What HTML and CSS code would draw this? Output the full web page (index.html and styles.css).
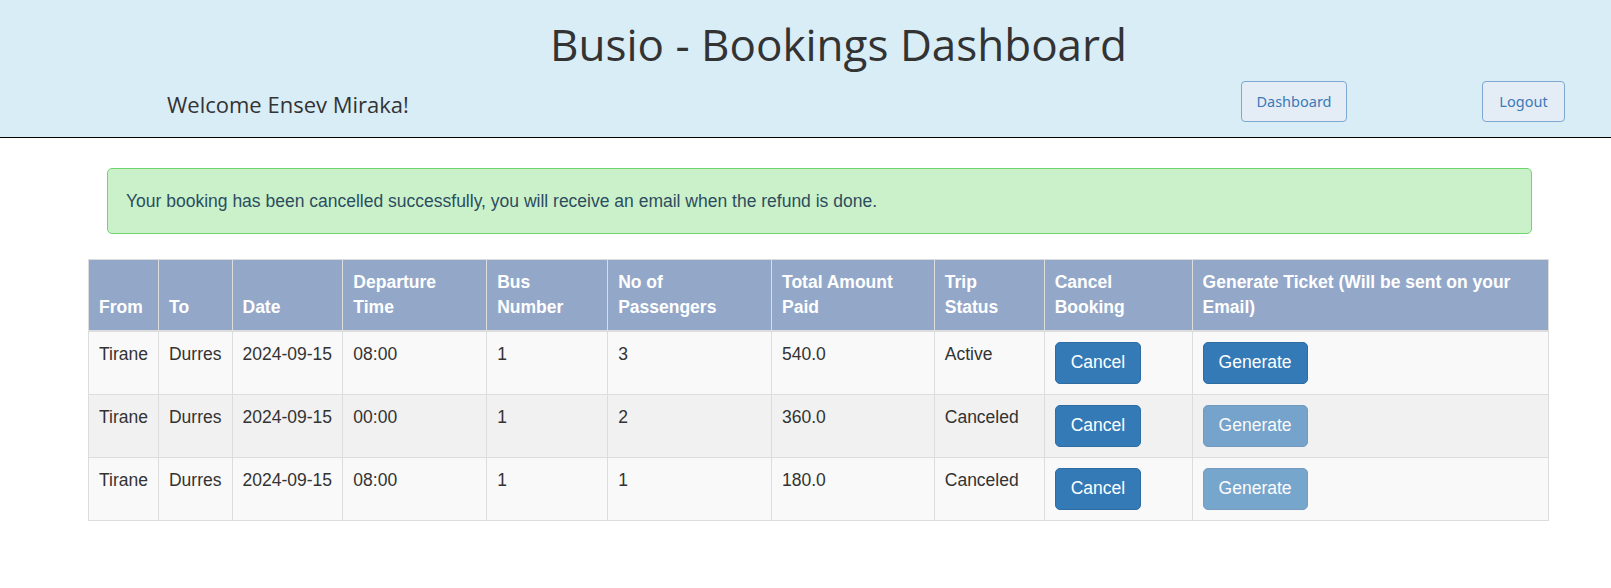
FILE: index.html
```html
<!DOCTYPE html>
<html lang="en">
<head>
<meta charset="utf-8">
<title>Busio - Bookings Dashboard</title>
<link rel="stylesheet" href="styles.css">
</head>
<body>
<header class="site-header">
  <h1 class="site-title">Busio - Bookings Dashboard</h1>
  <nav class="nav-row">
    <span class="welcome">Welcome Ensev Miraka!</span>
    <div class="nav-buttons">
      <a class="nav-btn" href="#">Dashboard</a>
      <a class="nav-btn" href="#">Logout</a>
    </div>
  </nav>
</header>
<main class="content">
  <div class="alert">Your booking has been cancelled successfully, you will receive an email when the refund is done.</div>
  <table class="bookings">
    <colgroup>
      <col class="c-from"><col class="c-to"><col class="c-date"><col class="c-time"><col class="c-bus"><col class="c-pass"><col class="c-amount"><col class="c-status"><col class="c-cancel"><col class="c-gen">
    </colgroup>
    <thead>
      <tr>
        <th>From</th><th>To</th><th>Date</th><th>Departure Time</th><th>Bus Number</th><th>No of Passengers</th><th>Total Amount Paid</th><th>Trip Status</th><th>Cancel Booking</th><th>Generate Ticket (Will be sent on your Email)</th>
      </tr>
    </thead>
    <tbody>
      <tr>
        <td>Tirane</td><td>Durres</td><td>2024-09-15</td><td>08:00</td><td>1</td><td>3</td><td>540.0</td><td>Active</td>
        <td><button class="btn">Cancel</button></td><td><button class="btn">Generate</button></td>
      </tr>
      <tr>
        <td>Tirane</td><td>Durres</td><td>2024-09-15</td><td>00:00</td><td>1</td><td>2</td><td>360.0</td><td>Canceled</td>
        <td><button class="btn">Cancel</button></td><td><button class="btn btn-disabled" disabled>Generate</button></td>
      </tr>
      <tr>
        <td>Tirane</td><td>Durres</td><td>2024-09-15</td><td>08:00</td><td>1</td><td>1</td><td>180.0</td><td>Canceled</td>
        <td><button class="btn">Cancel</button></td><td><button class="btn btn-disabled" disabled>Generate</button></td>
      </tr>
    </tbody>
  </table>
</main>
</body>
</html>
```

FILE: styles.css
```css
* { box-sizing: border-box; }

body {
  margin: 0;
  font-family: "Liberation Sans", Arial, sans-serif;
  font-size: 17.5px;
  line-height: 25px;
  color: #333;
  background: #fff;
}

.site-header {
  background: #d9edf7;
  border-bottom: 1.5px solid #000;
  padding: 16px 46px 14px 167px;
  height: 138px;
}

.site-title {
  margin: 0 -46px 9px -167px;
  padding-left: 66px;
  text-align: center;
  font-family: "Open Sans", sans-serif;
  font-weight: 400;
  font-size: 44px;
  line-height: 56px;
  color: #333;
}

.nav-row {
  display: flex;
  align-items: center;
  height: 41px;
}

.welcome {
  margin-right: auto;
  font-family: "Open Sans", sans-serif;
  font-size: 22px;
  color: #333;
  padding-top: 6px;
}

.nav-buttons {
  display: flex;
  gap: 135px;
}

.nav-btn {
  display: inline-flex;
  align-items: center;
  justify-content: center;
  height: 41px;
  padding: 0 14px;
  background: #e4edf6;
  border: 1px solid #7ea8d0;
  border-radius: 4px;
  color: #3a7ab8;
  text-decoration: none;
  font-family: "Noto Sans", sans-serif;
  font-size: 14.5px;
}

.nav-btn:first-child { width: 106px; }
.nav-btn:last-child { width: 83px; }

.content {
  padding: 30px 62px 0 88px;
}

.alert {
  margin: 0 17px 25px 19px;
  padding: 19.5px 18px;
  background: #cbf1cb;
  border: 1.5px solid #6ed66e;
  border-radius: 5px;
  color: #2c4d5e;
  line-height: 25px;
}

.bookings {
  width: 1461px;
  border-collapse: collapse;
  border: 1px solid #ddd;
}

.c-from { width: 70px; }
.c-to { width: 73px; }
.c-date { width: 111px; }
.c-time { width: 144px; }
.c-bus { width: 121px; }
.c-pass { width: 164px; }
.c-amount { width: 163px; }
.c-status { width: 110px; }
.c-cancel { width: 148px; }
.c-gen { width: 357px; }

.bookings th,
.bookings td {
  padding: 10px;
  border: 1px solid #ddd;
  text-align: left;
  vertical-align: top;
}

.bookings th {
  background: #93a8c9;
  color: #fff;
  font-weight: 700;
  vertical-align: bottom;
  padding-bottom: 9.5px;
  border-bottom: 2px solid #ddd;
  border-top: 0;
}

.bookings tbody tr:nth-child(odd) { background: #f9f9f9; }
.bookings tbody tr:nth-child(even) { background: #f1f1f1; }

.btn {
  display: inline-block;
  padding: 7.5px 15px;
  font-family: "Liberation Sans", Arial, sans-serif;
  font-size: 17.5px;
  line-height: 25px;
  color: #fff;
  background: #337ab7;
  border: 1px solid #2e6da4;
  border-radius: 5px;
  cursor: pointer;
}

.btn-disabled {
  opacity: 0.65;
  cursor: not-allowed;
}
```
